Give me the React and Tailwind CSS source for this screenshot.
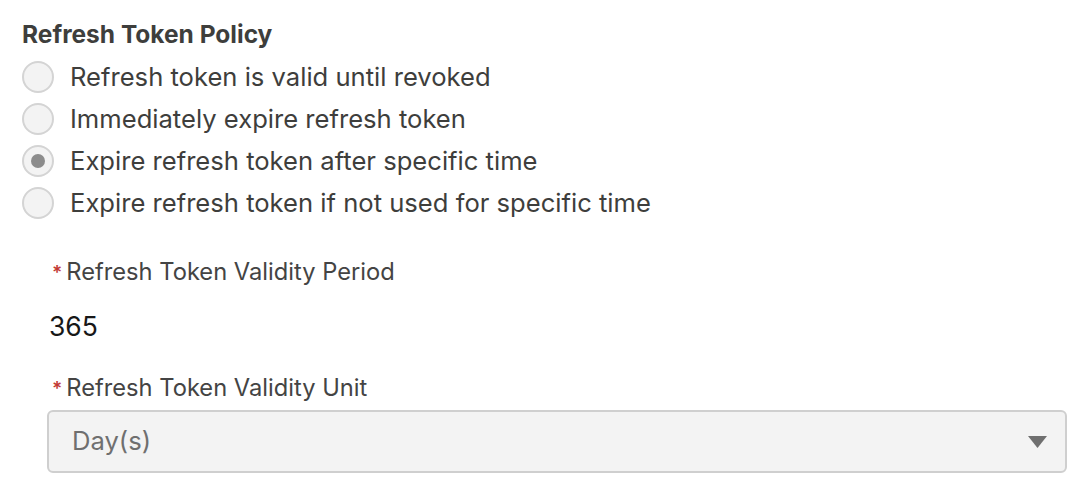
const options = [
  { label: 'Refresh token is valid until revoked', checked: false },
  { label: 'Immediately expire refresh token', checked: false },
  { label: 'Expire refresh token after specific time', checked: true },
  { label: 'Expire refresh token if not used for specific time', checked: false },
];

const Radio = ({ checked }) => (
  <span className="w-[32px] h-[32px] rounded-full border-2 border-[#d4d4d4] bg-[#f3f3f3] flex items-center justify-center shrink-0">
    {checked && <span className="w-[14px] h-[14px] rounded-full bg-[#8c8c8c]" />}
  </span>
);

const Label = ({ children }) => (
  <p className="h-[30px] flex items-center pl-[5px] text-[23.7px] text-[#444444]">
    <span className="text-[#c23934] text-[19px] font-semibold mr-[4px] self-start mt-[2px]">*</span>
    {children}
  </p>
);

export default function App() {
  return (
    <div className="w-[1090px] h-[498px] bg-white pl-[22px] pt-[20px] font-['Inter',sans-serif] overflow-hidden">
      <h2 className="text-[24.5px] leading-[28px] font-bold text-[#3e3e3c]">Refresh Token Policy</h2>
      <div className="mt-[8px] flex flex-col">
        {options.map((o) => (
          <label key={o.label} className="h-[42px] flex items-center gap-[16px]">
            <Radio checked={o.checked} />
            <span className="text-[25.6px] text-[#3e3e3c]">{o.label}</span>
          </label>
        ))}
      </div>
      <div className="ml-[25px] mt-[33px] w-[1020px]">
        <Label>Refresh Token Validity Period</Label>
        <p className="mt-[25px] h-[30px] flex items-center pl-[2px] text-[26.5px] text-[#181818]">365</p>
        <div className="mt-[31px]">
          <Label>Refresh Token Validity Unit</Label>
        </div>
        <div className="mt-[7px] h-[63px] rounded-[6px] border-2 border-[#cfcfcf] bg-[#f3f3f3] flex items-center justify-between pl-[23px] pr-[18px]">
          <span className="text-[25.6px] text-[#6f6f6f]">Day(s)</span>
          <svg width="19" height="12" viewBox="0 0 19 12">
            <path d="M0 0 H19 L9.5 12 Z" fill="#6f6f6f" />
          </svg>
        </div>
      </div>
    </div>
  );
}
